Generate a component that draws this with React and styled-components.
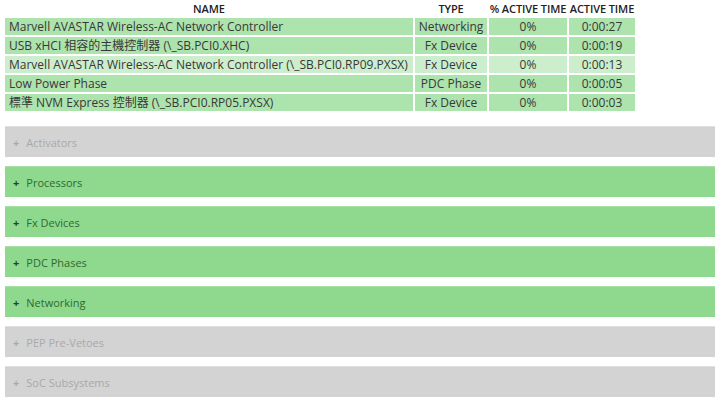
import React from "react";
import styled, { createGlobalStyle } from "styled-components";

const GlobalStyle = createGlobalStyle`
  body {
    margin: 0;
    background: #ffffff;
    font-family: "Open Sans", "Noto Sans CJK TC", sans-serif;
    color: #333333;
  }
`;

const Page = styled.div`
  width: 720px;
  height: 407px;
  overflow: hidden;
  padding: 0 5px;
  box-sizing: border-box;
`;

const Table = styled.table`
  width: 632px;
  margin-left: -2px;
  border-collapse: separate;
  border-spacing: 2px 2px;
  table-layout: fixed;
  font-size: 12px;
`;

const HeadCell = styled.th`
  font-weight: 600;
  font-size: 11px;
  letter-spacing: -0.1px;
  color: #222222;
  height: 14px;
  padding: 0;
  text-align: center;
  white-space: nowrap;
  line-height: 14px;
`;

const Cell = styled.td`
  background: ${props => (props.$light ? "#cdeecd" : "#ade3ad")};
  height: 17px;
  padding: 0 0 0 ${props => (props.$left ? "4px" : "0")};
  line-height: 17px;
  text-align: ${props => (props.$left ? "left" : "center")};
  white-space: nowrap;
  overflow: hidden;
  color: #383838;
`;

const Sections = styled.div`
  display: flex;
  flex-direction: column;
  gap: 9px;
  margin-top: 13px;
`;

const Section = styled.div`
  height: 31px;
  display: flex;
  align-items: center;
  gap: 7px;
  padding-left: 8px;
  font-size: 11px;
  background: ${props => (props.$active ? "#8fd98f" : "#d3d3d3")};
  color: ${props => (props.$active ? "#2e6a2e" : "#a9a9a9")};
  border-top: 1px solid ${props => (props.$active ? "#a6e2a6" : "#dedede")};
  box-sizing: border-box;
`;

const Plus = styled.span`
  font-size: 11px;
  font-weight: 700;
  color: ${props => (props.$active ? "#1f4a1f" : "#a9a9a9")};
`;

const rows = [
  ["Marvell AVASTAR Wireless-AC Network Controller", "Networking", "0%", "0:00:27"],
  ["USB xHCI 相容的主機控制器 (\\_SB.PCI0.XHC)", "Fx Device", "0%", "0:00:19"],
  ["Marvell AVASTAR Wireless-AC Network Controller (\\_SB.PCI0.RP09.PXSX)", "Fx Device", "0%", "0:00:13", true],
  ["Low Power Phase", "PDC Phase", "0%", "0:00:05"],
  ["標準 NVM Express 控制器 (\\_SB.PCI0.RP05.PXSX)", "Fx Device", "0%", "0:00:03"],
];

const sections = [
  ["Activators", false],
  ["Processors", true],
  ["Fx Devices", true],
  ["PDC Phases", true],
  ["Networking", true],
  ["PEP Pre-Vetoes", false],
  ["SoC Subsystems", false],
];

export default function App() {
  return (
    <Page>
      <GlobalStyle />
      <Table>
        <colgroup>
          <col style={{ width: 408 }} />
          <col style={{ width: 72 }} />
          <col style={{ width: 78 }} />
          <col style={{ width: 66 }} />
        </colgroup>
        <thead>
          <tr>
            <HeadCell>NAME</HeadCell>
            <HeadCell>TYPE</HeadCell>
            <HeadCell>% ACTIVE TIME</HeadCell>
            <HeadCell>ACTIVE TIME</HeadCell>
          </tr>
        </thead>
        <tbody>
          {rows.map(([name, type, pct, time, light]) => (
            <tr key={name}>
              <Cell $left $light={light}>{name}</Cell>
              <Cell $light={light}>{type}</Cell>
              <Cell $light={light}>{pct}</Cell>
              <Cell $light={light}>{time}</Cell>
            </tr>
          ))}
        </tbody>
      </Table>
      <Sections>
        {sections.map(([label, active]) => (
          <Section key={label} $active={active}>
            <Plus $active={active}>+</Plus>
            {label}
          </Section>
        ))}
      </Sections>
    </Page>
  );
}
